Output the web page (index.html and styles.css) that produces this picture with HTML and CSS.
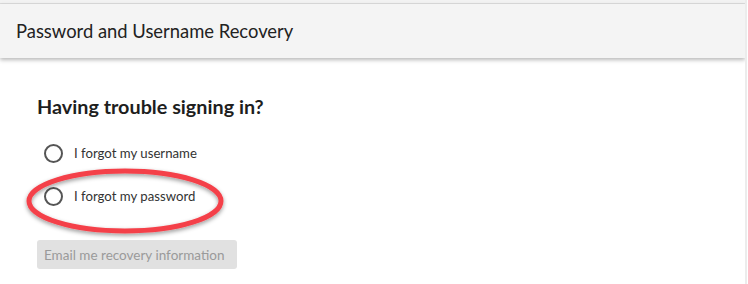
FILE: index.html
```html
<!DOCTYPE html>
<html>
<head>
<meta charset="utf-8">
<link rel="stylesheet" href="styles.css">
</head>
<body>
<div class="page">
  <div class="topstrip"></div>
  <header class="header">Password and Username Recovery</header>
  <main class="content">
    <h2 class="heading">Having trouble signing in?</h2>
    <div class="options">
      <label class="option"><span class="radio"></span><span>I forgot my username</span></label>
      <label class="option"><span class="radio"></span><span>I forgot my password</span></label>
    </div>
    <button class="btn" disabled>Email me recovery information</button>
    <svg class="annotation" width="210" height="80" viewBox="0 0 210 80">
      <defs>
        <filter id="sh" x="-10%" y="-20%" width="120%" height="150%">
          <feDropShadow dx="0" dy="2" stdDeviation="2" flood-color="#000" flood-opacity="0.4"/>
        </filter>
      </defs>
      <ellipse cx="103" cy="36" rx="96" ry="30" fill="none" stroke="#f4414a" stroke-width="5" filter="url(#sh)"/>
    </svg>
  </main>
</div>
</body>
</html>
```
FILE: styles.css
```css
html, body {
  margin: 0;
  padding: 0;
  background: #fff;
}
body {
  font-family: Lato, "Open Sans", sans-serif;
  color: #222;
}
.page {
  width: 745px;
  height: 284px;
  border-right: 2px solid #ececec;
  position: relative;
  overflow: hidden;
}
.topstrip {
  height: 3px;
  background: #f2f2f2;
  border-bottom: 1px solid #dcdcdc;
}
.header {
  height: 54px;
  background: #f4f4f4;
  box-shadow: 0 2px 4px rgba(0,0,0,0.28);
  padding-left: 16px;
  display: flex;
  align-items: center;
  font-size: 18.4px;
  color: #222;
  position: relative;
}
.content {
  padding: 36px 0 0 37px;
  position: relative;
}
.heading {
  margin: 0;
  font-size: 19.8px;
  font-weight: 700;
  color: #1e1e1e;
  line-height: 24px;
}
.options {
  display: flex;
  flex-direction: column;
  gap: 23px;
  margin-top: 25px;
}
.option {
  display: flex;
  align-items: center;
  gap: 11px;
  font-size: 13.2px;
  color: #333;
  height: 20px;
  padding-left: 7px;
}
.radio {
  width: 15px;
  height: 15px;
  border: 2px solid #555;
  border-radius: 50%;
  box-sizing: content-box;
  flex: none;
}
.btn {
  margin-top: 34px;
  width: 200px;
  height: 29px;
  border: none;
  border-radius: 3px;
  background: #e1e1e1;
  color: #9a9a9a;
  font-family: Lato, "Open Sans", sans-serif;
  font-size: 13.5px;
  padding: 0 0 0 7px;
  text-align: left;
}
.annotation {
  position: absolute;
  left: 22px;
  top: 107px;
}
```
